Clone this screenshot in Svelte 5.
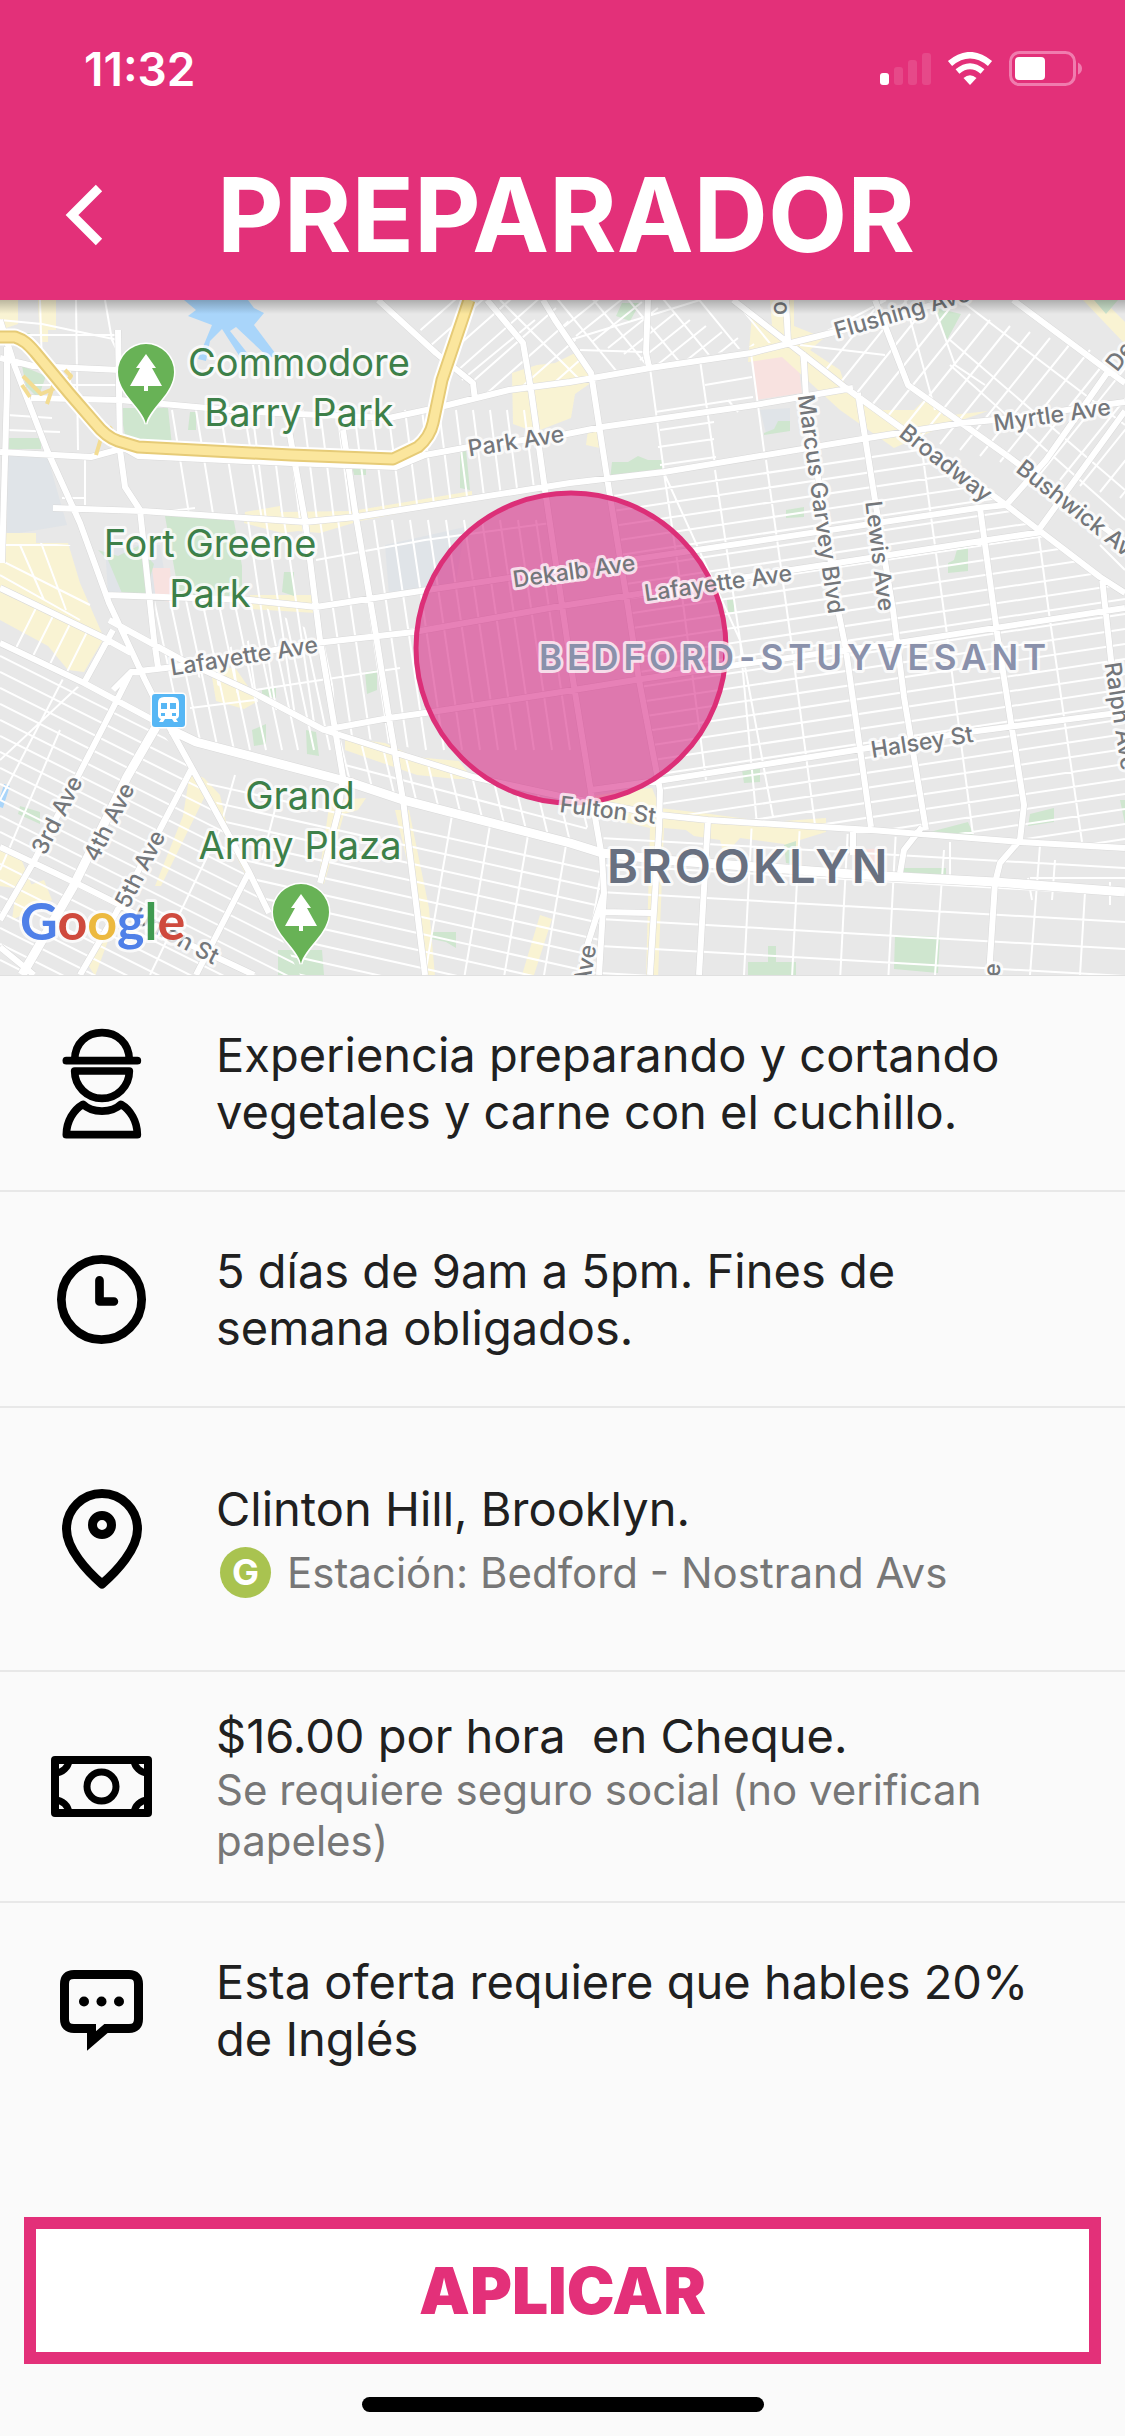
<script>
  // repeats one line n times, each copy moved by dx / dy
  function hatch(x1, y1, x2, y2, dx, dy, n) {
    let d = "";
    for (let i = 0; i < n; i++) {
      d += `M${x1 + dx * i} ${y1 + dy * i}L${x2 + dx * i} ${y2 + dy * i}`;
    }
    return d;
  }

  const shops = [
    "M38 300h18v30h-8v12h-8z",
    "M0 300h18v24l-18 6z",
    "M0 533h36v10h32l12 40 24 55-20 34-16-2-20-24-48-26z",
    "M245 512l35-6 0 6 72-1 120-20v8l-112 22-40 12-22-2-16 2-38-10z",
    "M250 595h66v18l-66-4z",
    "M210 665l26 4 22 32-14 8-28-8z",
    "M345 738l40 5 30 14 44 4 14 18-16 0-40-4-72-25z",
    "M190 772l14 6 16 17 8 36 26 44-5 6-44-85-44 90h-6l28-70z",
    "M395 810l14 0 20 98 6 68h-10l-12-90z",
    "M330 800l36-2-8 12-14 4-20 70-6-2z",
    "M540 915l12 4-18 56h-12z",
    "M512 373l25-8 18-2 22-11 8 18 10 10-20 14-4 24-36 14-22-8z",
    "M588 430l12 0v18l-14-3z",
    "M752 315l20 10-2-25h24v26l30 12-14 12 30 20 6 18 36 22 32 0 14-14 16 20 44-5-44 15-50 22-54-38-58-53-34 5z",
    "M1083 300h20l22 22v22z",
    "M570 800l60-10 22-2 8 20 50 6 60 8 56 -4 0 14-26 8-6 16-10-12-44-6-16 18-4-16-26-4-8-6-22-2-6 150-12 0 4-150-60-14z",
    "M0 848l20 8 14 35-34-5z",
    "M16 890l28-10 8 20-40 20z",
    "M85 960l12-20 18-18-20 54z"
  ];

  const parks = [
    "M18 333l12 0 6 18-14 0z",
    "M120 408h48l4 38-46-5z",
    "M165 516h68l9 50v35h-62z",
    "M190 412h6v18h-8z",
    "M284 572l10 0 0 24-12-4z",
    "M352 465h14v10h-12z",
    "M460 450l6 0 4 40-10-2z",
    "M98 550l10 10 16 38 20 0 10-34-16-18-20 10z",
    "M22 366l24 10-8 22-12-12z",
    "M7 438h34v11h-34z",
    "M622 303h18l-10 18-14-5z",
    "M936 308l25 6-14 26z",
    "M1094 300h24l-12 14z",
    "M612 462l16 0 10-6 10 4 14 0 0 14-52 6z",
    "M764 433l10-4 4-8 12 0v10l-26 4z",
    "M786 510l18-3v10l-18 1z",
    "M948 563l6-3 4-14 10 0 0 25-20 2z",
    "M727 600l7 0v12h-6z",
    "M252 730l14-6v20l-12 2z",
    "M262 690l14-4 0 12-14-2z",
    "M306 730l10 2 3 24-12-2z",
    "M365 672l12-2 0 20-10 4z",
    "M20 806l20 6v12l-22-10z",
    "M278 950h44l2 25h-46z",
    "M742 770l18-2v14l-16 1z",
    "M930 832l38-10 6 14z",
    "M1030 814l24-6v14l-26 4z",
    "M784 845l12-4 0 24-10-2z",
    "M902 868l44 0 0 8-44-4z",
    "M895 935l45 2-2 36-44-4z",
    "M748 962h20v-16h8v16h20v13h-48z",
    "M432 932h24v16l-10-6-14-3z",
    "M1120 800h5v24z"
  ];

  const mainRoads = [
    "M0 320L15 367 47 450 80 523 109 603 145 680 160 710 193 770 249 872 269 913",
    "M0 358L33 366 120 370",
    "M31 398L120 400 196 407 254 412 389 418 436 408 509 390 570 382 650 368 751 353 791 343 831 333 950 300",
    "M0 452L91 457 124 448",
    "M124 448L138 456 291 463 396 467 425 455 469 447 562 435 602 427 755 405 853 388",
    "M53 508L142 511 305 522 356 517 570 483 664 472 868 438 962 423 995 420 1125 402",
    "M105 595L250 600 316 607 414 592 697 550 977 508 1006 505",
    "M113 690L131 672 174 667 316 643 414 632 555 607 791 570 988 540 1042 532",
    "M324 730L389 718 425 713 555 693 635 680 737 665 904 642 1125 608",
    "M591 790L664 780 773 763 868 748 969 732 1125 712",
    "M109 620L182 660 254 693 324 730 393 752 473 777 560 796 660 815 708 820 871 830 1020 842 1125 848",
    "M0 643L84 683 153 720",
    "M0 588L102 637 131 653",
    "M113 630L84 683",
    "M131 672L116 702 76 780 33 863 0 920",
    "M191 770L156 837 116 913 80 975",
    "M249 872L196 975",
    "M0 847L76 883 116 903 180 940 254 975",
    "M0 947L34 975",
    "M7 347L7 390 2 563",
    "M118 330L120 450 125 487 140 510 154 640 158 667",
    "M289 430L305 520 320 640 343 777 338 813 320 883",
    "M343 430L356 517 374 623 389 718 403 800 425 975",
    "M378 300L436 353 473 383 475 400",
    "M487 300L523 343 531 390 545 490 573 680 595 817 602 857 604 893 599 975",
    "M543 300L555 320 591 373 609 490 628 607 639 680 660 790 659 830 650 975",
    "M648 300L646 353 649 367",
    "M733 300L791 345 846 388 904 430 1006 505 1100 577 1125 593",
    "M786 300L788 342",
    "M803 353L804 362 806 397 838 610 846 650 871 827",
    "M858 393L875 500 893 610 904 697 926 830",
    "M980 508L998 640 1024 805 1020 840 1000 863 995 883 989 975",
    "M1102 578L1111 660 1122 720",
    "M875 300L908 385 1009 457 1125 543",
    "M1013 300L1107 370 1125 383",
    "M1107 373L1046 460 1008 503",
    "M1125 411L1093 455 1040 528",
    "M708 820L699 975",
    "M853 830L853 855",
    "M922 827L904 850 900 873",
    "M602 912L651 913",
    "M604 893L588 943 580 975"
  ];

  const wideRoads = [
    "M171 730L196 742 349 782 403 800 570 843 602 853 664 860 864 875 995 882 1125 892",
    "M156 727L127 777 73 887 22 975"
  ];

  const highway =
    "M0 337L15 337C24 340 28 344 35 352L69 393 95 423Q106 437 118 441L138 447 291 455 393 459 418 447Q430 437 433 423L442 380 469 300";

  // side streets, one block of the city each
  const blocks = [
    {
      id: "bedstuy",
      clip: "612,480 868,438 905,432 1006,505 1125,593 1125,845 660,812",
      d:
        hatch(600, 498, 1125, 419, 0, 15, 33) +
        "M664 473L740 640 773 817M664 473L680 580 706 780M715 470L740 640 757 825M766 460L791 640 815 825M922 450L946 627 973 835M1038 530L1049 613 1082 842"
    },
    {
      id: "northbed",
      clip: "591,373 791,343 846,388 868,438 609,480",
      d:
        "M650 368L664 472M700 360L715 465M751 353L765 458M658 447L714 439M660 465L716 457M705 385L752 377M655 412L753 397M728 400L738 412M660 430L714 422"
    },
    {
      id: "wallabout",
      clip: "124,448 120,408 530,390 545,490 356,517 305,522 142,511",
      d:
        hatch(172, 410, 190, 520, 24, 0, 4) +
        hatch(252, 410, 266, 520, 17, 0, 18) +
        "M163 530V512L195 508"
    },
    {
      id: "clinton",
      clip: "245,520 305,522 356,517 545,490 591,785 324,730 174,667 250,640",
      d:
        hatch(158, 520, 192, 750, 18, 0, 24) +
        "M316 560L425 540 610 515M345 640L610 598M255 690L400 668"
    },
    {
      id: "fort",
      clip: "155,600 250,600 330,640 340,775 196,742 158,690",
      d: hatch(154, 600, 186, 750, 16, 0, 12) + "M190 708L255 700"
    },
    {
      id: "slope",
      clip: "0,650 153,722 193,772 265,905 300,975 0,975",
      d:
        hatch(0, 512, 300, 662, 0, 16, 32) +
        "M82 683L0 760M65 675L0 800M60 730L0 870M220 830L150 975"
    },
    {
      id: "gowanus",
      clip: "0,588 102,637 84,683 0,643",
      d: hatch(0, 680, 60, 560, 18, 6, 8)
    },
    {
      id: "heights",
      clip: "200,770 349,785 403,800 600,855 600,975 300,975 260,890",
      d:
        hatch(190, 780, 600, 872, 0, 17, 16) +
        hatch(452, 815, 425, 975, 38, 10, 5) +
        "M280 790L262 860M235 775L218 835"
    },
    {
      id: "prospect",
      clip: "193,750 345,785 403,798 580,840 598,810 473,777 330,735 200,740",
      d: hatch(340, 740, 352, 790, 22, 6, 12) + "M345 765L600 832M232 765L340 795"
    },
    {
      id: "crown",
      clip: "604,820 1125,850 1125,975 600,975",
      d:
        hatch(600, 838, 1125, 868, 0, 27, 6) +
        hatch(752, 820, 744, 975, 48, 3, 4) +
        "M944 850L935 975M1040 845L1030 975M1085 892L1080 975M1030 878H1125M1028 878L1032 900M1055 860L1052 900M1110 882V905M950 842V880"
    },
    {
      id: "bushwick",
      clip: "875,300 1125,300 1125,590 1006,505 846,388 791,343",
      d:
        hatch(890, 290, 800, 402, 20, 6, 22) +
        "M800 345L885 355M905 300L935 410M950 340L1125 490M950 365L1125 520M935 310L955 365 985 385M960 300L1125 425M820 335L886 300M1100 545L1125 570"
    },
    {
      id: "williamsburg",
      clip: "487,300 733,300 785,340 650,366 591,373 560,320 543,345 523,345",
      d:
        hatch(560, 330, 610, 290, 16, 6, 12) +
        hatch(550, 290, 640, 400, 32, -4, 8) +
        "M580 350L645 352M570 340L700 300"
    },
    {
      id: "flushing",
      clip: "400,300 560,300 590,375 440,405 436,353",
      d: hatch(415, 335, 500, 260, 14, 12, 9) + "M462 380L535 320M500 300L580 380"
    },
    {
      id: "downtown",
      clip: "0,300 118,300 118,440 140,510 80,523 0,430",
      d:
        "M40 300L42 366M76 300L78 450M105 300L112 340 119 355M0 320L42 324 118 340M0 335H118M30 385H118M7 415L52 418M7 430L60 432M62 498H85M85 455V505M70 370V400M53 508V545"
    },
    {
      id: "court",
      clip: "0,540 70,545 100,610 102,637 0,588",
      d: "M0 560L90 605M20 545L44 600M40 540L66 610M0 575L80 620M0 545H78"
    }
  ];

  const streets = [
    { name: "Park Ave", x: 516, y: 441, turn: -9 },
    { name: "Dekalb Ave", x: 574, y: 571, turn: -8 },
    { name: "Lafayette Ave", x: 718, y: 583, turn: -8 },
    { name: "Lafayette Ave", x: 244, y: 656, turn: -9 },
    { name: "Flushing Ave", x: 902, y: 312, turn: -16 },
    { name: "Myrtle Ave", x: 1052, y: 415, turn: -8 },
    { name: "Broadway", x: 946, y: 463, turn: 38 },
    { name: "Bushwick Ave", x: 1080, y: 512, turn: 38 },
    { name: "Marcus Garvey Blvd", x: 821, y: 504, turn: 82 },
    { name: "Lewis Ave", x: 880, y: 556, turn: 83 },
    { name: "Ralph Ave", x: 1121, y: 716, turn: 81 },
    { name: "Halsey St", x: 922, y: 742, turn: -9 },
    { name: "Fulton St", x: 608, y: 810, turn: 7 },
    { name: "3rd Ave", x: 57, y: 815, turn: -63 },
    { name: "4th Ave", x: 109, y: 822, turn: -63 },
    { name: "5th Ave", x: 140, y: 869, turn: -63 },
    { name: "Union St", x: 176, y: 936, turn: 28 },
    { name: "Ave", x: 585, y: 965, turn: -80 },
    { name: "De", x: 1120, y: 356, turn: -52 },
    { name: "o", x: 782, y: 308, turn: 87 },
    { name: "e", x: 992, y: 970, turn: -88 }
  ];

  const places = [
    { x: 299, lines: ["Commodore", "Barry Park"], y: 376 },
    { x: 210, lines: ["Fort Greene", "Park"], y: 557 },
    { x: 300, lines: ["Grand", "Army Plaza"], y: 809 }
  ];

  const trees = [
    { x: 146, y: 344 },
    { x: 301, y: 884 }
  ];

  const google = [
    ["G", "#4f80e8"],
    ["o", "#cf4a3d"],
    ["o", "#ecb93f"],
    ["g", "#4f80e8"],
    ["l", "#3f9a50"],
    ["e", "#cf4a3d"]
  ];
</script>

<div class="page">
  <header>
    <div class="status">
      <span class="time">11:32</span>
      <div class="signals">
        <svg width="51" height="34" viewBox="0 0 51 34" fill="#fff">
          <rect y="21" width="9" height="12" rx="3" />
          <rect x="14" y="15" width="9" height="18" rx="3" opacity=".12" />
          <rect x="28" y="8" width="9" height="25" rx="3" opacity=".12" />
          <rect x="42" y="1" width="9" height="32" rx="3" opacity=".12" />
        </svg>
        <svg width="46" height="34" viewBox="0 0 46 34" fill="none" stroke="#fff">
          <path d="M3 11.500Q23-5 43 11.500" stroke-width="6.500" />
          <path d="M10.500 19.500Q23 9 35.500 19.500" stroke-width="6" />
          <path d="M23 33l-6.500-7q6.500-5.500 13 0z" fill="#fff" stroke="none" />
        </svg>
        <svg width="74" height="36" viewBox="0 0 74 36">
          <rect x="1.500" y="1.500" width="64" height="32" rx="9" fill="none" stroke="#f07cae" stroke-width="3" />
          <rect x="6" y="6" width="30" height="23" rx="4" fill="#fff" />
          <path d="M69 11.500q4 2 4 6t-4 6z" fill="#f07cae" />
        </svg>
      </div>
    </div>
    <div class="bar">
      <button class="back" aria-label="Volver">
        <svg width="40" height="62" viewBox="0 0 40 62">
          <path d="M35 4L8 31l27 27" fill="none" stroke="#fff" stroke-width="9" />
        </svg>
      </button>
      <h1>PREPARADOR</h1>
    </div>
  </header>

  <svg class="map" viewBox="0 300 1125 675" role="img" aria-label="Mapa de Brooklyn">
    <defs>
      <linearGradient id="shade" x1="0" y1="0" x2="0" y2="1">
        <stop offset="0" stop-color="#000" stop-opacity=".25" />
        <stop offset="1" stop-color="#000" stop-opacity="0" />
      </linearGradient>
      {#each blocks as block}
        <clipPath id={block.id}><polygon points={block.clip} /></clipPath>
      {/each}
    </defs>

    <rect y="300" width="1125" height="675" fill="#e8e8e8" />
    <path d="M7 450l40 5 20 70-60 10zM105 545l55 0 8 50-60 0zM385 545l80-18-10 60-66 8zM760 410l30-2v20l-24 5z" fill="#e0e4e8" />
    <path d="M752 360l45-7 5 40-46 7zM855 850l30-2v22l-30-2zM152 568l18 0 2 34-16-2z" fill="#f8e2e0" />
    <path d={shops.join("")} fill="#f9f3d3" />
    <path d={parks.join("")} fill="#cfe6cf" />
    <path d="M184 300h64l6 8 10 5-10 12 24 32h-10l-32-30-6 4 22 28-12-2-18-28-12 12-4 20-8-2 14-34-24-9 8-6z" fill="#a9d5fa" />
    <path d="M7 785l-7 22" stroke="#a9d5fa" stroke-width="6" />

    {#each blocks as block}
      <path class="lane" d={block.d} clip-path="url(#{block.id})" />
    {/each}

    <g class="road">
      <path d={mainRoads.join("")} stroke="#d9d9d9" stroke-width="7" />
      <path d={wideRoads.join("")} stroke="#d9d9d9" stroke-width="10" />
      <path d={mainRoads.join("")} stroke="#fff" stroke-width="6" />
      <path d={wideRoads.join("")} stroke="#fff" stroke-width="9" />
      <path d="M23 376l18 18 24-10 6-8-6-6M30 397l-8-12M96 455l6-20 10-8M47 404l8-24" stroke="#f3dc92" stroke-width="4" />
      <path d={highway} stroke="#fff" stroke-width="17" />
      <path d={highway} stroke="#e6cb77" stroke-width="13" />
      <path d={highway} stroke="#fbe69d" stroke-width="9" />
    </g>

    <circle cx="571" cy="648" r="155" fill="#d72d87" fill-opacity=".6" stroke="#dc2f78" stroke-width="5" />

    {#each trees as tree}
      <g transform="translate({tree.x} {tree.y})">
        <path d="M0 80C-3 64-28 50-28 28a28 28 0 0 1 56 0C28 50 3 64 0 80z" fill="#68b256" stroke="#fff" stroke-width="3" paint-order="stroke" />
        <path d="M0 10l10 14h-4l10 18H2v5h-4v-5h-14l10-18h-4z" fill="#fff" />
      </g>
    {/each}

    <g transform="translate(152 694)">
      <rect width="33" height="33" rx="3" fill="#57b7f5" stroke="#fff" stroke-width="3" paint-order="stroke" />
      <path d="M12 3h9q6 0 6 6v12q0 3-3 4l2 3h-4l-2-3h-7l-2 3H7l2-3q-3-1-3-4V9q0-6 6-6z" fill="#fff" />
      <path d="M9 9h6v6H9zM18 9h6v6h-6zM9 19h4v3H9zM20 19h4v3h-4z" fill="#57b7f5" />
    </g>

    {#each streets as street}
      <text class="street" transform="translate({street.x} {street.y}) rotate({street.turn})" dy="8">{street.name}</text>
    {/each}
    {#each places as place}
      {#each place.lines as line, i}
        <text class="place" x={place.x} y={place.y + i * 50}>{line}</text>
      {/each}
    {/each}
    <text class="district" x="539" y="670">BEDFORD-STUYVESANT</text>
    <text class="borough" x="607" y="883">BROOKLYN</text>
    <text class="google" x="20" y="940">{#each google as [letter, color]}<tspan fill={color}>{letter}</tspan>{/each}</text>

    <rect y="300" width="1125" height="14" fill="url(#shade)" />
  </svg>

  <main>
    <section class="row">
      <div class="icon">
        <svg width="80" height="111" viewBox="0 0 240 333" fill="none" stroke="#000" stroke-width="23" stroke-linejoin="round" stroke-linecap="round">
          <path d="M38 96C38 45 75 14 120 14s82 31 82 82" />
          <path d="M13 98H226" />
          <path d="M38 129H202C202 175 165 211 120 211S38 175 38 129Z" />
          <path d="M13 320C13 280 35 245 63 229C90 256 150 256 177 229C205 245 226 280 226 320Z" />
        </svg>
      </div>
      <p>Experiencia preparando y cortando vegetales y carne con el cuchillo.</p>
    </section>

    <section class="row">
      <div class="icon">
        <svg width="89" height="89" viewBox="0 0 266 266" fill="none" stroke="#000" stroke-width="26" stroke-linejoin="round" stroke-linecap="round">
          <circle cx="133" cy="133" r="120" />
          <path d="M127 76V139H170" />
        </svg>
      </div>
      <p>5 días de 9am a 5pm. Fines de semana obligados.</p>
    </section>

    <section class="row tall">
      <div class="icon">
        <svg width="80" height="100" viewBox="0 0 80 100" fill="none" stroke="#000" stroke-width="9" stroke-linejoin="round">
          <path d="M40 95C25 82 4.500 60 4.500 40a35.500 35.500 0 0 1 71 0C75.500 60 55 82 40 95Z" />
          <circle cx="40" cy="36" r="9.500" />
        </svg>
      </div>
      <div class="text">
        <p>Clinton Hill, Brooklyn.</p>
        <div class="station">
          <span class="line">G</span>
          <span class="note">Estación: Bedford - Nostrand Avs</span>
        </div>
      </div>
    </section>

    <section class="row tight">
      <div class="icon">
        <svg width="101" height="61" viewBox="0 0 101 61" fill="none" stroke="#000" stroke-width="8" stroke-linejoin="round">
          <rect x="4" y="4" width="93" height="53" />
          <circle cx="50.500" cy="30.500" r="14.500" stroke-width="7" />
          <path d="M18 4A14 14 0 0 1 4 17M83 4A14 14 0 0 0 97 17M4 44A14 14 0 0 1 18 57M97 44A14 14 0 0 0 83 57" stroke-width="7" />
        </svg>
      </div>
      <div class="text">
        <p class="pay">$16.00 por hora  en Cheque.</p>
        <p class="note">Se requiere seguro social (no verifican papeles)</p>
      </div>
    </section>

    <section class="row">
      <div class="icon">
        <svg width="83" height="81" viewBox="0 0 83 81">
          <path d="M14 4.500H69Q78.500 4.500 78.500 14V49Q78.500 58.500 69 58.500H46L31.500 71V58.500H14Q4.500 58.500 4.500 49V14Q4.500 4.500 14 4.500Z" fill="none" stroke="#000" stroke-width="9" />
          <circle cx="24" cy="31.500" r="5" />
          <circle cx="41.500" cy="31.500" r="5" />
          <circle cx="59" cy="31.500" r="5" />
        </svg>
      </div>
      <p>Esta oferta requiere que hables 20% de Inglés</p>
    </section>
  </main>

  <footer>
    <button class="apply">APLICAR</button>
    <div class="home"></div>
  </footer>
</div>

<style>
  :global(body) {
    margin: 0;
    background: #fafafa;
  }

  .page {
    display: flex;
    flex-direction: column;
    min-height: 100vh;
    background: #fafafa;
    color: #202020;
    font-family: Inter, "Liberation Sans", sans-serif;
  }

  p,
  h1 {
    margin: 0;
  }

  svg {
    display: block;
  }

  header {
    padding-bottom: 8px;
    background: #e33079;
    color: #fff;
  }
  .status {
    display: flex;
    align-items: center;
    justify-content: space-between;
    height: 138px;
    padding: 0 42px 0 84px;
  }
  .time {
    font-size: 46px;
    font-weight: 600;
  }
  .signals {
    display: flex;
    align-items: center;
    gap: 16px;
  }
  .bar {
    display: flex;
    align-items: center;
    height: 154px;
  }
  .back {
    width: 217px;
    padding: 0 0 0 64px;
    border: 0;
    background: none;
  }
  h1 {
    font-size: 103px;
    line-height: 120px;
    font-weight: 700;
  }

  .map {
    width: 100%;
    height: auto;
    border-bottom: 1px solid #e0e0e0;
  }
  .lane {
    fill: none;
    stroke: #fff;
    stroke-width: 2;
  }
  .road {
    fill: none;
    stroke-linejoin: round;
  }
  .map text {
    paint-order: stroke;
    stroke: rgba(255, 255, 255, 0.75);
    stroke-width: 6px;
    stroke-linejoin: round;
  }
  .street {
    font-size: 23px;
    font-weight: 500;
    fill: #74777b;
    text-anchor: middle;
  }
  .place {
    font-size: 38px;
    fill: #3d8049;
    text-anchor: middle;
  }
  .district {
    font-size: 35px;
    font-weight: 600;
    letter-spacing: 5px;
    fill: #8a91ab;
  }
  .borough {
    font-size: 47px;
    font-weight: 600;
    letter-spacing: 3px;
    fill: #687080;
  }
  .google {
    font-family: Lato, sans-serif;
    font-size: 52px;
    font-weight: 700;
  }

  .row {
    display: flex;
    align-items: center;
    padding: 50px 72px 50px 0;
    border-bottom: 2px solid #e8e8e8;
    font-size: 47px;
    line-height: 57px;
  }
  .row:last-child {
    border-bottom: 0;
  }
  .tall {
    padding-top: 72px;
    padding-bottom: 72px;
  }
  .tight {
    padding-top: 35px;
    padding-bottom: 35px;
  }
  .icon {
    display: flex;
    flex: none;
    justify-content: center;
    width: 203px;
    margin-right: 13px;
  }
  .pay {
    white-space: pre-wrap;
  }
  .note {
    color: #777;
    font-size: 42px;
    line-height: 51px;
  }
  .station {
    display: flex;
    align-items: center;
    gap: 16px;
    margin-top: 10px;
    padding-left: 4px;
  }
  .line {
    width: 51px;
    border-radius: 50%;
    background: #a9c350;
    color: #fff;
    font-size: 36px;
    line-height: 51px;
    font-weight: 700;
    text-align: center;
  }

  footer {
    display: flex;
    flex-direction: column;
    align-items: center;
    gap: 33px;
    margin-top: auto;
    padding: 24px;
  }
  .apply {
    width: 100%;
    padding: 24px;
    border: 12px solid #e33079;
    background: #fff;
    color: #e33079;
    font-family: inherit;
    font-size: 64px;
    line-height: 75px;
    font-weight: 900;
  }
  .home {
    width: 402px;
    height: 15px;
    border-radius: 8px;
    background: #000;
  }
</style>
